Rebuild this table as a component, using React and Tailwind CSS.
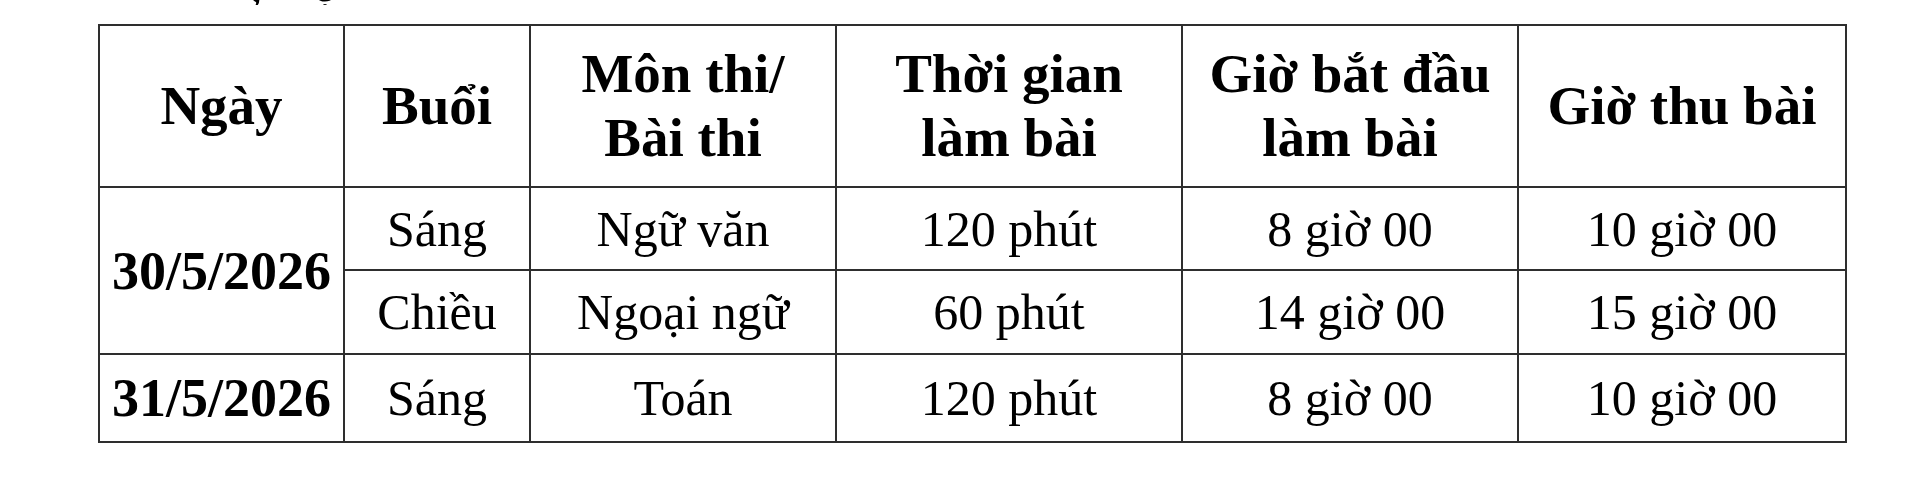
import React from 'react';

const cols = [245, 186, 306, 346, 336, 328];

const rows = [
    { date: '30/5/2026', span: 2, buoi: 'Sáng', mon: 'Ngữ văn', tg: '120 phút', bd: '8 giờ 00', thu: '10 giờ 00', h: 'h-[83px]' },
    { buoi: 'Chiều', mon: 'Ngoại ngữ', tg: '60 phút', bd: '14 giờ 00', thu: '15 giờ 00', h: 'h-[84px]' },
    { date: '31/5/2026', span: 1, buoi: 'Sáng', mon: 'Toán', tg: '120 phút', bd: '8 giờ 00', thu: '10 giờ 00', h: 'h-[88px]' },
];

const th = "border-2 border-[#2e2e2e] text-center align-middle font-bold text-[55px] leading-[64px] text-black";
const td = "border-2 border-[#2e2e2e] text-center align-middle text-[50px] leading-none text-black";

export default function App() {
    return (
        <div className="w-[1920px] h-[487px] bg-white overflow-hidden" style={{ fontFamily: '"Liberation Serif", "Times New Roman", serif' }}>
            {/* cut-off tail of the line above */}
            <div className="h-[5px] overflow-hidden">
                <div className="-mt-[38px] pl-[250px] flex gap-[50px] text-[50px] leading-[44px] text-black">
                    <span>,</span>
                    <span>ọ</span>
                </div>
            </div>

            <table className="ml-[98px] mt-[19px] table-fixed border-collapse w-[1747px]">
                <colgroup>
                    {cols.map((w, i) => (
                        <col key={i} style={{ width: w }} />
                    ))}
                </colgroup>
                <thead>
                    <tr className="h-[162px]">
                        <th className={th}>Ngày</th>
                        <th className={th}>Buổi</th>
                        <th className={th}>Môn thi/<br />Bài thi</th>
                        <th className={th}>Thời gian<br />làm bài</th>
                        <th className={th}>Giờ bắt đầu<br />làm bài</th>
                        <th className={th}>Giờ thu bài</th>
                    </tr>
                </thead>
                <tbody>
                    {rows.map((r, i) => (
                        <tr key={i} className={r.h}>
                            {r.date && (
                                <td rowSpan={r.span} className={`${td} font-bold text-[54px]`}>{r.date}</td>
                            )}
                            <td className={td}>{r.buoi}</td>
                            <td className={td}>{r.mon}</td>
                            <td className={td}>{r.tg}</td>
                            <td className={td}>{r.bd}</td>
                            <td className={td}>{r.thu}</td>
                        </tr>
                    ))}
                </tbody>
            </table>
        </div>
    );
}
